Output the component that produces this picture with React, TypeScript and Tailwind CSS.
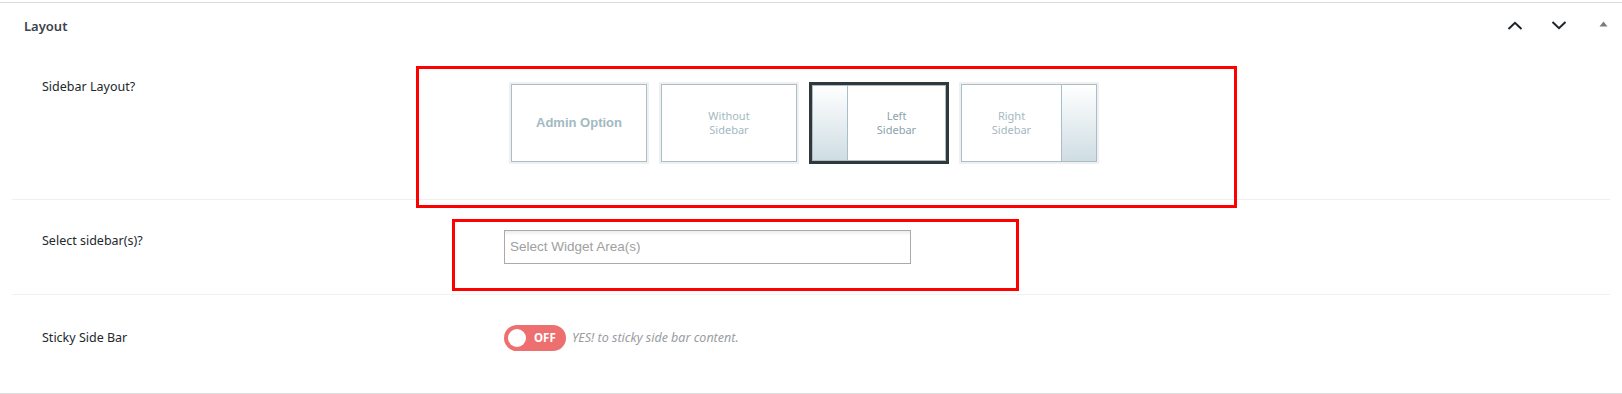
import React from "react";

type OptionKind = "admin" | "none" | "left" | "right";

interface LayoutOption {
    kind: OptionKind;
    lines: string[];
    selected?: boolean;
}

const options: LayoutOption[] = [
    { kind: "admin", lines: ["Admin Option"] },
    { kind: "none", lines: ["Without", "Sidebar"] },
    { kind: "left", lines: ["Left", "Sidebar"], selected: true },
    { kind: "right", lines: ["Right", "Sidebar"] },
];

const ChevronUp = () => (
    <svg width="16" height="9" viewBox="0 0 16 9" fill="none">
        <path d="M1.5 8 L8 1.8 L14.5 8" stroke="#1d2327" strokeWidth="2" />
    </svg>
);

const ChevronDown = () => (
    <svg width="16" height="9" viewBox="0 0 16 9" fill="none">
        <path d="M1.5 1 L8 7.2 L14.5 1" stroke="#1d2327" strokeWidth="2" />
    </svg>
);

const Triangle = () => (
    <svg width="9" height="6" viewBox="0 0 9 6">
        <path d="M0.5 5.5 L4.5 0.5 L8.5 5.5 Z" fill="#787c82" />
    </svg>
);

const Strip = ({ side }: { side: "left" | "right" }) => (
    <div
        className={`w-[35px] h-full shrink-0 bg-[linear-gradient(#ffffff,#cfdde3)] border-[#a9bec6] ${
            side === "left" ? "border-r" : "border-l"
        }`}
    />
);

const OptionCard = ({ option }: { option: LayoutOption }) => {
    const frame = option.selected
        ? "border-[3px] border-[#32373c]"
        : "border-2 border-[#f0f0f1]";
    const textColor = option.selected ? "text-[#8aa3ad]" : "text-[#a3b9c1]";

    return (
        <div className={`w-[140px] h-[82px] box-border ${frame}`}>
            <div className="h-full flex border border-[#a9bec6] bg-white">
                {option.kind === "left" && <Strip side="left" />}
                <div className="flex-1 flex flex-col items-center justify-center">
                    {option.kind === "admin" ? (
                        <span className="font-['Liberation_Sans',sans-serif] text-[13px] font-bold text-[#a3b9c1]">
                            {option.lines[0]}
                        </span>
                    ) : (
                        option.lines.map((line) => (
                            <span key={line} className={`text-[11px] leading-[14px] ${textColor}`}>
                                {line}
                            </span>
                        ))
                    )}
                </div>
                {option.kind === "right" && <Strip side="right" />}
            </div>
        </div>
    );
};

const App = () => {
    return (
        <div className="relative w-[1622px] h-[394px] bg-white pt-[2px] font-['Noto_Sans',sans-serif] overflow-hidden">
            <div className="border-y border-[#dcdcde]">
                {/* header */}
                <div className="h-[45px] flex items-center justify-between">
                    <h2 className="pl-[24px] pt-[2px] text-[13px] font-semibold text-[#3c434a]">Layout</h2>
                    <div className="flex items-center pr-[4px] h-full">
                        <button className="w-[44px] h-full flex items-center justify-center">
                            <ChevronUp />
                        </button>
                        <button className="w-[44px] h-full flex items-center justify-center">
                            <ChevronDown />
                        </button>
                        <button className="ml-[8px] w-[29px] h-full flex items-center justify-center pb-[3px]">
                            <Triangle />
                        </button>
                    </div>
                </div>

                <div className="mx-[12px]">
                    {/* sidebar layout */}
                    <div className="h-[152px] box-border flex pl-[30px] border-b border-[#f0f0f1]">
                        <label className="w-[462px] shrink-0 pt-[31px] text-[12.5px] leading-[16px] text-[#23282d]">
                            Sidebar Layout?
                        </label>
                        <div className="pt-[34px] pl-[5px] flex gap-[10px]">
                            {options.map((o) => (
                                <OptionCard key={o.kind} option={o} />
                            ))}
                        </div>
                    </div>

                    {/* sidebars */}
                    <div className="h-[95px] box-border flex pl-[30px] border-b border-[#f0f0f1]">
                        <label className="w-[462px] shrink-0 pt-[33px] text-[12.5px] leading-[16px] text-[#23282d]">
                            Select sidebar(s)?
                        </label>
                        <div className="pt-[30px]">
                            <div className="w-[407px] h-[34px] border border-[#aaaaaa] bg-[linear-gradient(#eeeeee_1%,#ffffff_15%)] flex items-center px-[5px]">
                                <span className="font-['Liberation_Sans',sans-serif] text-[13.5px] text-[#a0a0a0]">
                                    Select Widget Area(s)
                                </span>
                            </div>
                        </div>
                    </div>

                    {/* sticky */}
                    <div className="h-[98px] box-border flex pl-[30px]">
                        <label className="w-[462px] shrink-0 pt-[35px] text-[12.5px] leading-[16px] text-[#23282d]">
                            Sticky Side Bar
                        </label>
                        <div className="pt-[30px] flex items-center h-fit gap-[6px]">
                            <div className="w-[62px] h-[26px] rounded-full bg-[#ee6f70] flex items-center pl-[4px] gap-[8px]">
                                <span className="w-[18px] h-[18px] rounded-full bg-white" />
                                <span className="text-[11.5px] font-bold text-white">OFF</span>
                            </div>
                            <span className="text-[12.5px] italic text-[#999ca1]">
                                YES! to sticky side bar content.
                            </span>
                        </div>
                    </div>
                </div>
            </div>

            {/* annotation boxes */}
            <div className="absolute left-[416px] top-[66px] w-[821px] h-[142px] border-[3px] border-[#ff0000]" />
            <div className="absolute left-[452px] top-[219px] w-[567px] h-[72px] border-[3px] border-[#ff0000]" />
        </div>
    );
};

export default App;
